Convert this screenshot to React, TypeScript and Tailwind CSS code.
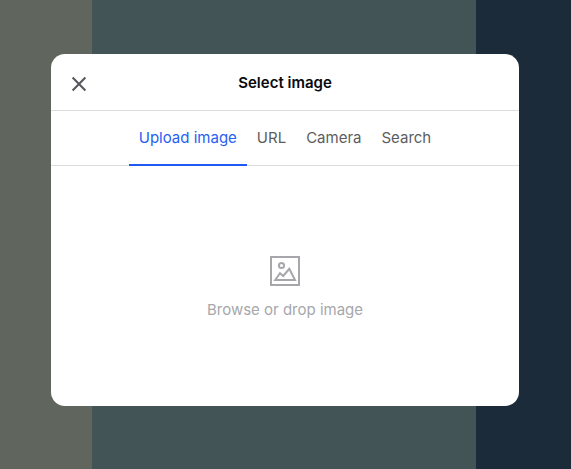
const tabs = ['Upload image', 'URL', 'Camera', 'Search'];

export default function App() {
  return (
    <main className="grid h-[469px] w-[571px] grid-cols-[92px_384px_95px] grid-rows-[469px] overflow-hidden font-['Inter',sans-serif]">
      <div className="col-start-1 row-start-1 bg-[#60655d]" />
      <div className="col-start-2 row-start-1 bg-[#435457]" />
      <div className="col-start-3 row-start-1 bg-[#1c2b3a]" />
      <section
        role="dialog"
        aria-label="Select image"
        className="z-10 col-span-3 col-start-1 row-start-1 mt-[54px] ml-[51px] flex h-[352px] w-[468px] flex-col overflow-hidden rounded-[14px] bg-white"
      >
        <header className="grid h-[57px] shrink-0 grid-cols-[56px_1fr_56px] items-center border-b border-[#dedede]">
          <button aria-label="Close" className="flex h-full items-center justify-center pt-1">
            <svg width="16" height="16" viewBox="0 0 16 16" fill="none" stroke="#58595d" strokeWidth="2.1">
              <path d="M1.6 1.6 14.4 14.4M14.4 1.6 1.6 14.4" />
            </svg>
          </button>
          <h1 className="pt-0.5 text-center text-[15px] leading-5 font-semibold text-[#080a0d]">Select image</h1>
        </header>
        <nav className="flex h-[55px] shrink-0 justify-center border-b border-[#dedede]">
          {tabs.map((tab, i) => (
            <button
              key={tab}
              className={
                i === 0
                  ? 'z-10 -mb-px h-[55px] border-b-2 border-[#2058f3] px-2.5 text-[15px] leading-5 text-[#2561f3]'
                  : '-mb-px h-[55px] border-b-2 border-transparent px-2.5 text-[15px] leading-5 text-[#5c5d61]'
              }
            >
              {tab}
            </button>
          ))}
        </nav>
        <div className="flex flex-1 flex-col items-center pt-[90px] text-[#a6a7aa]">
          <svg width="30" height="30" viewBox="0 0 30 30" fill="none" stroke="currentColor" strokeWidth="2">
            <path d="M1 1h28v28H1z" />
            <circle cx="11.5" cy="9.5" r="2.6" />
            <path d="M5.2 24 10 17.2l3.2 2.8 6.1-7.1L25 24Z" />
          </svg>
          <p className="mt-[14px] text-[15px] leading-5">Browse or drop image</p>
        </div>
      </section>
    </main>
  );
}
